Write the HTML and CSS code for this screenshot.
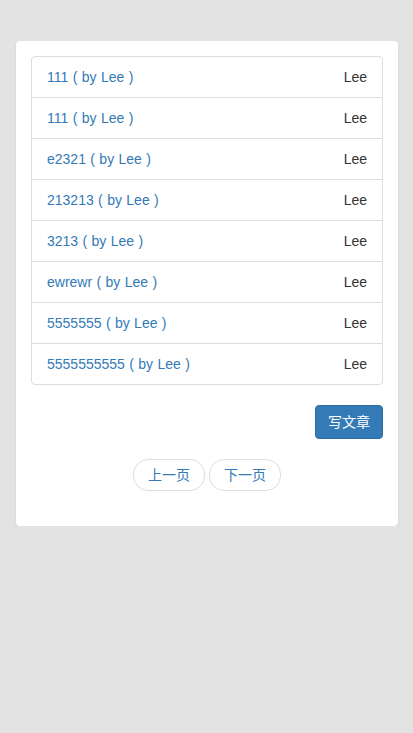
FILE: index.html
```html
<!DOCTYPE html>
<html lang="zh">
<head>
<meta charset="utf-8">
<title>文章列表</title>
<link rel="stylesheet" href="styles.css">
</head>
<body>
<div class="page">
  <div class="card">
    <ul class="list">
      <li class="item"><a href="#">111 ( by Lee )</a><span class="author">Lee</span></li>
      <li class="item"><a href="#">111 ( by Lee )</a><span class="author">Lee</span></li>
      <li class="item"><a href="#">e2321 ( by Lee )</a><span class="author">Lee</span></li>
      <li class="item"><a href="#">213213 ( by Lee )</a><span class="author">Lee</span></li>
      <li class="item"><a href="#">3213 ( by Lee )</a><span class="author">Lee</span></li>
      <li class="item"><a href="#">ewrewr ( by Lee )</a><span class="author">Lee</span></li>
      <li class="item"><a href="#">5555555 ( by Lee )</a><span class="author">Lee</span></li>
      <li class="item"><a href="#">5555555555 ( by Lee )</a><span class="author">Lee</span></li>
    </ul>
    <div class="actions">
      <a class="btn-primary" href="#">写文章</a>
    </div>
    <div class="pager">
      <a class="pager-btn" href="#">上一页</a>
      <a class="pager-btn" href="#">下一页</a>
    </div>
  </div>
</div>
</body>
</html>
```
FILE: styles.css
```css
* { box-sizing: border-box; }
html, body {
  margin: 0;
  padding: 0;
  background: #e3e3e3;
  font-family: "Liberation Sans", Arial, "Noto Sans CJK SC", sans-serif;
  font-size: 14px;
  line-height: 20px;
  color: #333;
}
.page {
  padding: 41px 15px 0 16px;
}
.card {
  background: #fff;
  border-radius: 4px;
  box-shadow: 0 1px 2px rgba(0,0,0,0.12);
  padding: 15px 15px 35px 15px;
}
.list {
  list-style: none;
  margin: 0 0 20px 0;
  padding: 0;
}
.item {
  display: flex;
  justify-content: space-between;
  padding: 10px 15px;
  border: 1px solid #ddd;
  margin-bottom: -1px;
}
.item:first-child { border-radius: 4px 4px 0 0; }
.item:last-child { border-radius: 0 0 4px 4px; margin-bottom: 0; }
.item a {
  color: #337ab7;
  text-decoration: none;
  word-spacing: 0.5px;
}
.author { color: #333; }
.actions {
  display: flex;
  justify-content: flex-end;
}
.btn-primary {
  display: inline-block;
  padding: 6px 12px;
  font-size: 14px;
  line-height: 20px;
  color: #fff;
  background: #337ab7;
  border: 1px solid #2e6da4;
  border-radius: 4px;
  text-decoration: none;
}
.pager {
  display: flex;
  justify-content: center;
  gap: 4px;
  margin-top: 20px;
}
.pager-btn {
  display: inline-block;
  padding: 5px 14px;
  border: 1px solid #ddd;
  border-radius: 15px;
  background: #fff;
  color: #337ab7;
  text-decoration: none;
}
```
